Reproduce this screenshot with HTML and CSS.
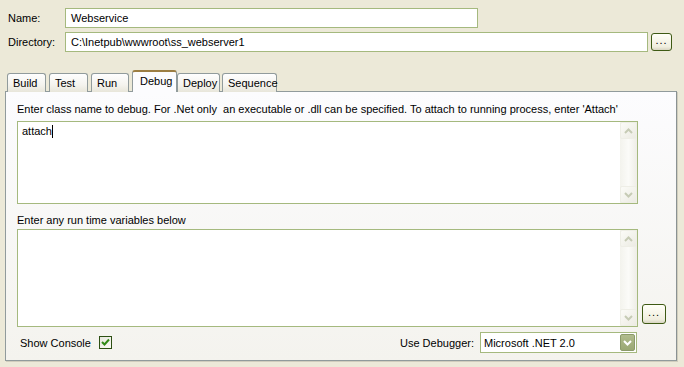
FILE: index.html
```html
<!DOCTYPE html>
<html lang="en">
<head>
  <meta charset="UTF-8" />
  <title>Webservice – Project Settings</title>
  <link rel="stylesheet" href="styles.css">
</head>
<body>
  <div class="top-fields">
    <div class="field-row">
      <label class="field-label">Name:</label>
      <div class="input name-input">Webservice</div>
    </div>
    <div class="field-row">
      <label class="field-label">Directory:</label>
      <div class="input dir-input">C:\Inetpub\wwwroot\ss_webserver1</div>
      <button class="dots-btn small">...</button>
    </div>
  </div>

  <div class="tabs">
    <div class="tab">Build</div>
    <div class="tab">Test</div>
    <div class="tab">Run</div>
    <div class="tab active">Debug</div>
    <div class="tab">Deploy</div>
    <div class="tab">Sequence</div>
  </div>

  <div class="panel">
    <p class="hint">Enter class name to debug. For .Net only&nbsp; an executable or .dll can be specified. To attach to running process, enter 'Attach'</p>
    <div class="memo-row">
      <div class="memo memo-class">
        <div class="memo-text">attach<span class="caret"></span></div>
        <div class="scrollbar">
          <div class="sb-btn">
            <svg width="9" height="6" viewBox="0 0 9 6"><path d="M1 5 L4.5 1.5 L8 5" fill="none" stroke="#c6cbb5" stroke-width="2"/></svg>
          </div>
          <div class="sb-btn">
            <svg width="9" height="6" viewBox="0 0 9 6"><path d="M1 1 L4.5 4.5 L8 1" fill="none" stroke="#c6cbb5" stroke-width="2"/></svg>
          </div>
        </div>
      </div>
    </div>

    <p class="hint second">Enter any run time variables below</p>
    <div class="memo-row">
      <div class="memo memo-vars">
        <div class="memo-text"></div>
        <div class="scrollbar">
          <div class="sb-btn">
            <svg width="9" height="6" viewBox="0 0 9 6"><path d="M1 5 L4.5 1.5 L8 5" fill="none" stroke="#c6cbb5" stroke-width="2"/></svg>
          </div>
          <div class="sb-btn">
            <svg width="9" height="6" viewBox="0 0 9 6"><path d="M1 1 L4.5 4.5 L8 1" fill="none" stroke="#c6cbb5" stroke-width="2"/></svg>
          </div>
        </div>
      </div>
      <button class="dots-btn">...</button>
    </div>

    <div class="bottom-row">
      <span class="console-label">Show Console</span>
      <span class="checkbox">
        <svg width="9" height="9" viewBox="0 0 9 9"><path d="M1 4 L3.5 6.5 L8 1.5" fill="none" stroke="#318a16" stroke-width="2"/></svg>
      </span>
      <span class="debugger-label">Use Debugger:</span>
      <div class="select">
        <span>Microsoft .NET 2.0</span>
        <span class="select-btn">
          <svg width="9" height="6" viewBox="0 0 9 6"><path d="M1 1 L4.5 4.5 L8 1" fill="none" stroke="#fff" stroke-width="2"/></svg>
        </span>
      </div>
    </div>
  </div>
</body>
</html>
```

FILE: styles.css
```css
body {
  font-family: "Liberation Sans", Arial, sans-serif;
  font-size: 11px;
  color: #000;
  background-color: #ece9d8;
  margin: 0;
  padding: 0;
  width: 684px;
  height: 367px;
  overflow: hidden;
}

.top-fields {
  padding: 8px 0 0 8px;
  display: flex;
  flex-direction: column;
  gap: 4px;
}

.field-row {
  display: flex;
  align-items: center;
  height: 20px;
}

.field-label {
  width: 57px;
}

.input {
  box-sizing: border-box;
  height: 20px;
  border: 1px solid #a5b97e;
  background-color: #fff;
  padding: 0 5px;
  line-height: 18px;
}

.name-input {
  width: 413px;
}

.dir-input {
  width: 583px;
}

.dots-btn {
  box-sizing: border-box;
  width: 24px;
  height: 20px;
  padding: 0 0 3px;
  border: 1px solid #3e5a14;
  border-radius: 3px;
  background: linear-gradient(#fffff8, #f0eedf 80%, #d8d5c2);
  font-family: inherit;
  font-size: 11px;
  line-height: 11px;
  color: #000;
  letter-spacing: 1px;
}

.dots-btn.small {
  width: 21px;
  height: 18px;
  margin-left: 3px;
}

/* tab strip */
.tabs {
  display: flex;
  align-items: flex-end;
  margin: 19px 0 0 7px;
  height: 21px;
  position: relative;
  z-index: 1;
  margin-bottom: -1px;
}

.tab {
  box-sizing: border-box;
  height: 19px;
  margin-right: 3px;
  padding: 0 6px 0 5px;
  border: 1px solid #919b9c;
  border-bottom: none;
  border-radius: 3px 3px 0 0;
  background: linear-gradient(#fefefe, #f4f3ee 60%, #e8e6da);
  line-height: 19px;
}

.tab:nth-child(1) { width: 39px; }
.tab:nth-child(2) { width: 39px; }
.tab:nth-child(3) { width: 38px; }
.tab:nth-child(5) { width: 43px; margin-left: -3px; }
.tab:nth-child(6) { width: 55px; margin-left: -1px; }

.tab.active {
  width: 45px;
  height: 22px;
  padding-left: 7px;
  border-top: 2px solid #9c7e43;
  background: #fcfcfe;
  line-height: 18px;
  margin-right: 3px;
}

.panel {
  box-sizing: border-box;
  margin-left: 5px;
  width: 672px;
  height: 270px;
  border: 1px solid #919b9c;
  border-right-color: #8a9293;
  box-shadow: 1px 1px 0 #d0cdbd;
  background: linear-gradient(#fcfcfe, #f4f3ee);
  padding: 11px 0 0 11px;
}

.hint {
  margin: 0 0 6px;
  height: 12px;
  line-height: 12px;
}

.hint.second {
  margin: 10px 0 3px;
}

.memo-row {
  display: flex;
  align-items: flex-end;
}

.memo {
  box-sizing: border-box;
  width: 621px;
  border: 1px solid #a5b97e;
  background-color: #fff;
  display: flex;
}

.memo-class {
  height: 83px;
}

.memo-vars {
  height: 98px;
}

.memo-text {
  flex: 1;
  padding: 3px 4px;
  line-height: 13px;
}

.caret {
  display: inline-block;
  width: 1px;
  height: 13px;
  background: #000;
  vertical-align: top;
}

.scrollbar {
  width: 17px;
  display: flex;
  flex-direction: column;
  justify-content: space-between;
  background: linear-gradient(90deg, #f3f3ed, #fbfbf8 50%, #eeede6);
}

.sb-btn {
  box-sizing: border-box;
  height: 17px;
  border: 1px solid #eeeee6;
  border-radius: 2px;
  background: linear-gradient(135deg, #fbfbf7, #ecebe3);
  display: flex;
  align-items: center;
  justify-content: center;
}

.memo-row .dots-btn {
  margin: 0 0 3px 4px;
}

.bottom-row {
  display: flex;
  align-items: center;
  margin-top: 5px;
  height: 21px;
}

.console-label {
  margin-left: 3px;
  width: 79px;
}

.checkbox {
  box-sizing: border-box;
  width: 13px;
  height: 13px;
  border: 1px solid #2d4f13;
  background: linear-gradient(135deg, #e6e7dc, #fbfbf7);
  display: flex;
  align-items: center;
  justify-content: center;
}

.debugger-label {
  margin-left: 288px;
  width: 80px;
}

.select {
  box-sizing: border-box;
  width: 157px;
  height: 21px;
  border: 1px solid #a5b97e;
  background-color: #fff;
  display: flex;
  align-items: center;
  justify-content: space-between;
  padding: 1px 1px 1px 3px;
}

.select-btn {
  box-sizing: border-box;
  width: 15px;
  height: 17px;
  border: 1px solid #8b9a6a;
  border-radius: 2px;
  background: linear-gradient(#b1bc8d, #9aa873);
  display: flex;
  align-items: center;
  justify-content: center;
}
```
